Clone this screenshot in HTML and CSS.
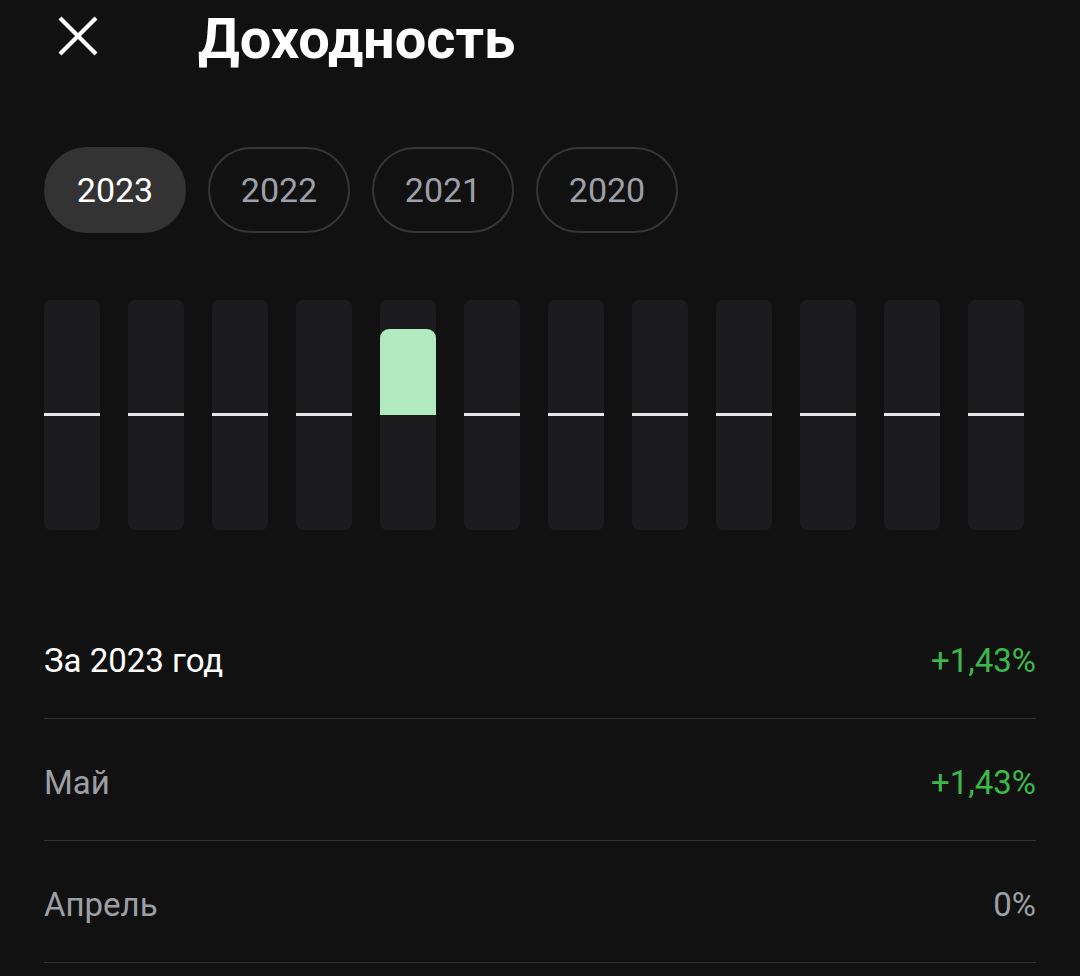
FILE: index.html
```html
<!DOCTYPE html>
<html lang="ru">

<head>
  <meta charset="UTF-8" />
  <meta name="viewport" content="width=device-width, initial-scale=1.0" />
  <title>Доходность</title>
  <link rel="stylesheet" href="styles.css">
</head>

<body>
  <div class="page">
    <div class="header">
      <button class="close" aria-label="Закрыть">
        <svg width="40" height="40" viewBox="0 0 40 40">
          <path d="M2 2 L38 38 M38 2 L2 38" stroke="#fff" stroke-width="4.2" fill="none" />
        </svg>
      </button>
      <h1 class="title">Доходность</h1>
    </div>

    <div class="years">
      <button class="chip active">2023</button>
      <button class="chip">2022</button>
      <button class="chip">2021</button>
      <button class="chip">2020</button>
    </div>

    <!-- 12 месяцев, середина столбика = 0% -->
    <div class="chart">
      <div class="bar"><div class="zero"></div></div>
      <div class="bar"><div class="zero"></div></div>
      <div class="bar"><div class="zero"></div></div>
      <div class="bar"><div class="zero"></div></div>
      <div class="bar"><div class="plus" style="height: 86px;"></div></div>
      <div class="bar"><div class="zero"></div></div>
      <div class="bar"><div class="zero"></div></div>
      <div class="bar"><div class="zero"></div></div>
      <div class="bar"><div class="zero"></div></div>
      <div class="bar"><div class="zero"></div></div>
      <div class="bar"><div class="zero"></div></div>
      <div class="bar"><div class="zero"></div></div>
    </div>

    <div class="list">
      <div class="row total">
        <span>За 2023 год</span>
        <span class="up">+1,43%</span>
      </div>
      <div class="row">
        <span>Май</span>
        <span class="up">+1,43%</span>
      </div>
      <div class="row">
        <span>Апрель</span>
        <span>0%</span>
      </div>
    </div>
  </div>
</body>

</html>
```

FILE: styles.css
```css
* {
  box-sizing: border-box;
}

body {
  margin: 0;
  background-color: #111111;
  color: #ffffff;
  font-family: Roboto, "Noto Sans", sans-serif;
}

.page {
  padding: 0 44px;
}

.header {
  display: flex;
  align-items: center;
  height: 78px;
}

.close {
  width: 40px;
  height: 40px;
  margin: -6px 0 0 14px;
  padding: 0;
  border: none;
  background: none;
}

.close svg {
  display: block;
}

.title {
  margin: 0 0 0 100px;
  font-size: 56px;
  font-weight: 700;
}

.years {
  display: flex;
  gap: 22px;
  margin-top: 69px;
}

.chip {
  width: 142px;
  height: 86px;
  border: 2px solid #363636;
  border-radius: 43px;
  background: none;
  color: #9c9fa5;
  font-family: Roboto, sans-serif;
  font-size: 34px;
}

.chip.active {
  border-color: #333333;
  background-color: #333333;
  color: #ffffff;
}

.chart {
  display: flex;
  gap: 28px;
  margin-top: 67px;
}

.bar {
  position: relative;
  width: 56px;
  height: 230px;
  border-radius: 7px;
  background-color: #1c1c1e;
}

.zero {
  position: absolute;
  left: 0;
  right: 0;
  top: 113px;
  height: 3px;
  background-color: #e6e6e6;
}

.plus {
  position: absolute;
  left: 0;
  right: 0;
  bottom: 115px;
  border-radius: 9px 9px 0 0;
  background-color: #b2eabf;
}

.list {
  margin-top: 67px;
}

.row {
  display: flex;
  justify-content: space-between;
  align-items: center;
  height: 122px;
  padding-top: 6px;
  border-bottom: 1px solid #333333;
  color: #9c9fa5;
  font-size: 33px;
}

.row.total {
  color: #ffffff;
}

.up {
  color: #3cb84b;
}
```
